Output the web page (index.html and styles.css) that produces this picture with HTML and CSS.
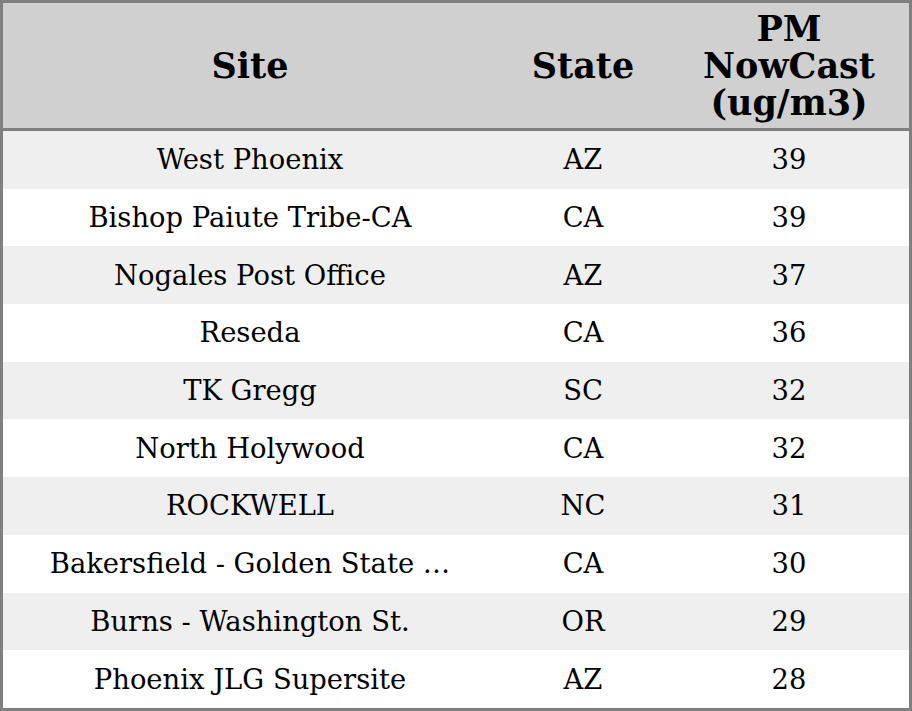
FILE: index.html
```html
<!DOCTYPE html>
<html>
<head>
<meta charset="utf-8">
<link rel="stylesheet" href="styles.css">
</head>
<body>
<table class="data">
  <colgroup>
    <col class="c-site">
    <col class="c-state">
    <col class="c-pm">
  </colgroup>
  <thead>
    <tr class="head">
      <th>Site</th>
      <th>State</th>
      <th>PM<br>NowCast<br>(ug/m3)</th>
    </tr>
  </thead>
  <tbody>
    <tr><td>West Phoenix</td><td>AZ</td><td>39</td></tr>
    <tr><td>Bishop Paiute Tribe-CA</td><td>CA</td><td>39</td></tr>
    <tr><td>Nogales Post Office</td><td>AZ</td><td>37</td></tr>
    <tr><td>Reseda</td><td>CA</td><td>36</td></tr>
    <tr><td>TK Gregg</td><td>SC</td><td>32</td></tr>
    <tr><td>North Holywood</td><td>CA</td><td>32</td></tr>
    <tr><td>ROCKWELL</td><td>NC</td><td>31</td></tr>
    <tr><td>Bakersfield - Golden State …</td><td>CA</td><td>30</td></tr>
    <tr><td>Burns - Washington St.</td><td>OR</td><td>29</td></tr>
    <tr><td>Phoenix JLG Supersite</td><td>AZ</td><td>28</td></tr>
  </tbody>
</table>
</body>
</html>
```

FILE: styles.css
```css
html, body {
  margin: 0;
  padding: 0;
  background: #ffffff;
}

.data {
  width: 912px;
  border-collapse: separate;
  border-spacing: 0;
  border: 3px solid #808080;
  table-layout: fixed;
  font-family: "DejaVu Serif", serif;
  color: #000;
}

.c-site { width: 494px; }
.c-state { width: 172px; }
.c-pm { width: 240px; }

.head th {
  background: #d0d0d0;
  height: 125px;
  padding: 0;
  font-size: 35px;
  line-height: 37px;
  font-weight: bold;
  text-align: center;
  vertical-align: middle;
  border-bottom: 3px solid #808080;
}

.data td {
  height: 57.7px;
  box-sizing: border-box;
  padding: 1px 0 0 0;
  font-size: 27.4px;
  line-height: 32px;
  text-align: center;
  vertical-align: middle;
  white-space: nowrap;
}

.data tbody tr:nth-child(odd) td {
  background: #efefef;
}
```
